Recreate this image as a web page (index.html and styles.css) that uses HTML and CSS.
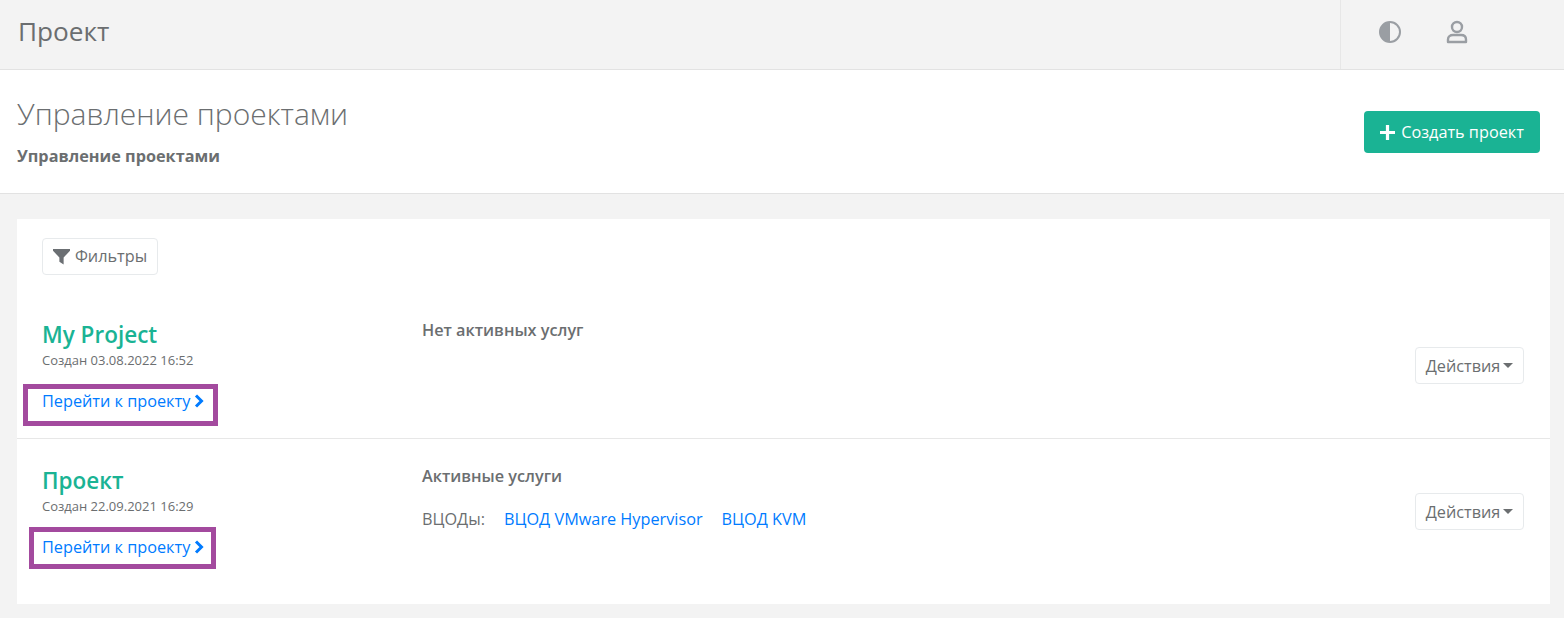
FILE: index.html
```html
<!DOCTYPE html>
<html lang="ru">
<head>
<meta charset="utf-8">
<title>Проект</title>
<link rel="stylesheet" href="styles.css">
</head>
<body>
<header class="topbar">
  <div class="topbar-title">Проект</div>
  <div class="topbar-tools">
    <svg class="tool-icon contrast" viewBox="0 0 24 24" width="24" height="24"><circle cx="12" cy="12" r="10" fill="none" stroke="#9a9ea3" stroke-width="2"/><path d="M12 2a10 10 0 0 0 0 20z" fill="#9a9ea3"/></svg>
    <svg class="tool-icon user" viewBox="0 0 24 24" width="24" height="24"><circle cx="12" cy="7" r="5" fill="none" stroke="#9a9ea3" stroke-width="2.400"/><path d="M3 22v-2.500c0-3 2.300-4.500 5-4.500h8c2.700 0 5 1.500 5 4.500V22z" fill="none" stroke="#9a9ea3" stroke-width="2.400" stroke-linejoin="round"/></svg>
  </div>
</header>
<section class="pagehead">
  <div>
    <h1 class="pagehead-title">Управление проектами</h1>
    <div class="pagehead-crumb">Управление проектами</div>
  </div>
  <button class="btn-create"><svg viewBox="0 0 14 14" width="15" height="15"><path d="M5.500 0h3v5.500H14v3H8.500V14h-3V8.500H0v-3h5.500z" fill="#fff"/></svg><span>Создать проект</span></button>
</section>
<main class="card">
  <div class="filters-row">
    <button class="btn-light btn-filter"><svg viewBox="0 0 16 16" width="17" height="17"><path d="M0 1h16v1.500L10 9v6.500L6 13V9L0 2.500z" fill="#6b6f73"/></svg><span class="btn-text">Фильтры</span></button>
  </div>
  <article class="project">
    <div class="project-main">
      <a class="project-name">My Project</a>
      <div class="project-date">Создан 03.08.2022 16:52</div>
      <a class="project-link">Перейти к проекту<svg viewBox="0 0 10 14" width="10" height="14"><path d="M2 1.500 7.500 7 2 12.500" fill="none" stroke="#007bff" stroke-width="3"/></svg></a>
      <span class="mark mark-first"></span>
    </div>
    <div class="project-services">
      <div class="services-title">Нет активных услуг</div>
    </div>
    <button class="btn-light btn-actions"><span>Действия</span><span class="caret"></span></button>
  </article>
  <article class="project">
    <div class="project-main">
      <a class="project-name">Проект</a>
      <div class="project-date">Создан 22.09.2021 16:29</div>
      <a class="project-link">Перейти к проекту<svg viewBox="0 0 10 14" width="10" height="14"><path d="M2 1.500 7.500 7 2 12.500" fill="none" stroke="#007bff" stroke-width="3"/></svg></a>
      <span class="mark mark-second"></span>
    </div>
    <div class="project-services">
      <div class="services-title">Активные услуги</div>
      <div class="services-list"><span class="services-label">ВЦОДы:</span><a>ВЦОД VMware Hypervisor</a><a>ВЦОД KVM</a></div>
    </div>
    <button class="btn-light btn-actions"><span>Действия</span><span class="caret"></span></button>
  </article>
</main>
</body>
</html>
```
FILE: styles.css
```css
* { box-sizing: border-box; }
html, body { margin: 0; padding: 0; }
body {
  background: #f3f3f3;
  color: #6b6e70;
  font-family: "Open Sans", sans-serif;
  font-size: 16.25px;
  height: 618px;
  overflow: hidden;
}
.topbar {
  height: 70px;
  display: flex;
  justify-content: space-between;
  border-bottom: 1px solid #e2e2e2;
}
.topbar-title {
  font-size: 26.2px;
  padding: 14px 0 0 18px;
  line-height: 34px;
}
.topbar-tools {
  width: 224px;
  border-left: 1px solid #e7e7e7;
  display: flex;
  align-items: flex-start;
  padding: 20px 0 0 37px;
  gap: 43px;
}
.tool-icon { display: block; }
.pagehead {
  height: 124px;
  background: #fff;
  border-bottom: 1px solid #e2e2e2;
  display: flex;
  justify-content: space-between;
  padding: 0 24px 0 17px;
}
.pagehead-title {
  margin: 0;
  padding-top: 24px;
  font-size: 30px;
  font-weight: 300;
  line-height: 40px;
}
.pagehead-crumb {
  margin-top: 11px;
  font-weight: 700;
  line-height: 22px;
}
.btn-create {
  margin-top: 41px;
  width: 176px;
  height: 42px;
  background: #1ab394;
  border: 0;
  border-radius: 4px;
  color: #fff;
  font: 400 16.25px/22px "Open Sans", sans-serif;
  display: flex;
  align-items: center;
  justify-content: center;
  gap: 6px;
  padding: 0;
}
.card {
  margin: 25px 14px 0 17px;
  height: 385px;
  background: #fff;
}
.filters-row { padding: 19px 25px 18px; }
.btn-light {
  height: 37px;
  background: #fff;
  border: 1px solid #e7eaec;
  border-radius: 4px;
  color: #6b6e70;
  font: 400 16.25px/22px "Open Sans", sans-serif;
  display: inline-flex;
  align-items: center;
  justify-content: center;
  padding: 0;
  gap: 3px;
  vertical-align: top;
}
.btn-text { position: relative; top: -1px; }
.btn-filter { width: 116px; gap: 5px; }
.btn-actions { width: 109px; align-self: center; }
.project {
  display: grid;
  grid-template-columns: 380px 1fr auto;
  height: 146px;
  padding: 0 26px 0 25px;
  border-bottom: 1px solid #e7e7e7;
}
.project:last-child { border-bottom-color: transparent; }
.project-main { position: relative; padding-top: 26px; }
.project-name {
  display: block;
  color: #1ab394;
  font-size: 22.5px;
  font-weight: 600;
  line-height: 32px;
}
.project-date {
  font-size: 13px;
  line-height: 18px;
}
.project-link {
  display: flex;
  align-items: center;
  gap: 4px;
  color: #007bff;
  line-height: 22px;
  margin-top: 21px;
}
.project-services { padding-top: 26px; }
.services-title {
  font-weight: 600;
  line-height: 22px;
}
.services-list {
  display: flex;
  margin-top: 21px;
  line-height: 22px;
}
.services-label { margin-right: 19px; }
.services-list a { color: #007bff; margin-right: 19px; }
.caret {
  width: 0;
  height: 0;
  border-left: 5px solid transparent;
  border-right: 5px solid transparent;
  border-top: 5px solid #6b6e70;
}
.mark {
  position: absolute;
  border: 5px solid #a34a9e;
  pointer-events: none;
}
.mark-first { left: -19px; top: 91px; width: 195px; height: 42px; }
.mark-second { left: -13px; top: 88px; width: 187px; height: 42px; }
```
